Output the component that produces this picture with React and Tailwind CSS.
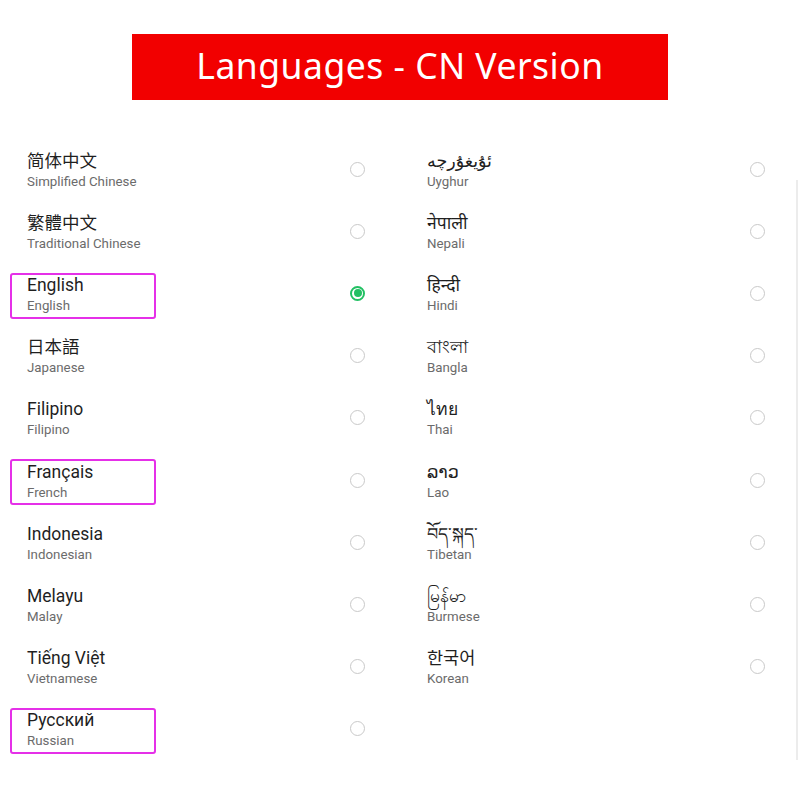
import React from "react";

const left = [
  ["简体中文", "Simplified Chinese", false, false],
  ["繁體中文", "Traditional Chinese", false, false],
  ["English", "English", true, true],
  ["日本語", "Japanese", false, false],
  ["Filipino", "Filipino", false, false],
  ["Français", "French", false, true],
  ["Indonesia", "Indonesian", false, false],
  ["Melayu", "Malay", false, false],
  ["Tiếng Việt", "Vietnamese", false, false],
  ["Русский", "Russian", false, true],
];

const right = [
  ["ئۇيغۇرچە", "Uyghur"],
  ["नेपाली", "Nepali"],
  ["हिन्दी", "Hindi"],
  ["বাংলা", "Bangla"],
  ["ไทย", "Thai"],
  ["ລາວ", "Lao"],
  ["བོད་སྐད་", "Tibetan"],
  ["မြန်မာ", "Burmese"],
  ["한국어", "Korean"],
];

function Radio({ checked }) {
  if (checked) {
    return (
      <div className="w-[15px] h-[15px] rounded-full border-2 border-[#22c063] flex items-center justify-center">
        <div className="w-[8px] h-[8px] rounded-full bg-[#22c063]" />
      </div>
    );
  }
  return <div className="w-[15px] h-[15px] rounded-full border-[1.5px] border-[#c9c9c9]" />;
}

function Row({ title, sub, checked, boxed }) {
  return (
    <div className="relative h-[62.2px] flex items-center pl-[27px] pr-[35px]">
      {boxed && (
        <div className="absolute left-[10px] top-[10.5px] w-[146px] h-[46px] border-2 border-[#e530e8] rounded-[3px]" />
      )}
      <div className="flex-1 flex flex-col pt-[2px]">
        <div className="text-[17.5px] leading-[22px] text-[#1f1f1f]">{title}</div>
        <div className="mt-[1px] text-[13.3px] leading-[18px] text-[#6b6b6b]">{sub}</div>
      </div>
      <Radio checked={checked} />
    </div>
  );
}

export default function App() {
  return (
    <div
      className="relative w-[800px] h-[800px] bg-white flex flex-col items-center"
      style={{ fontFamily: "Roboto, 'Noto Sans', 'Noto Sans CJK SC', 'DejaVu Sans', sans-serif" }}
    >
      <div
        className="mt-[34px] w-[536px] h-[66px] pb-[3px] bg-[#f20000] flex items-center justify-center text-white text-[35.5px] tracking-[0.5px]"
        style={{ fontFamily: "'Noto Sans', 'Open Sans', sans-serif" }}
      >
        Languages - CN Version
      </div>
      <div className="mt-[38px] w-[800px] grid grid-cols-2">
        <div className="flex flex-col">
          {left.map(([t, s, c, b]) => (
            <Row key={s} title={t} sub={s} checked={c} boxed={b} />
          ))}
        </div>
        <div className="flex flex-col">
          {right.map(([t, s]) => (
            <Row key={s} title={t} sub={s} />
          ))}
        </div>
      </div>
      <div className="absolute right-[2px] top-[180px] w-[2px] h-[580px] bg-[#ececec]" />
    </div>
  );
}
